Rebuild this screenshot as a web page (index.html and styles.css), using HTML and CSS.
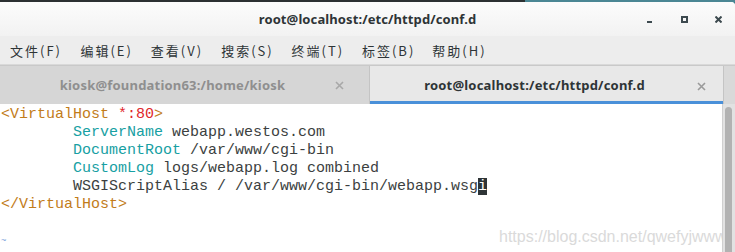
FILE: index.html
```html
<!DOCTYPE html>
<html lang="zh">
<head>
<meta charset="utf-8">
<title>root@localhost:/etc/httpd/conf.d</title>
<link rel="stylesheet" href="styles.css">
</head>
<body>
<div class="desktop-strip"></div>
<div class="window">
  <header class="titlebar">
    <div class="spacer"></div>
    <div class="title">root@localhost:/etc/httpd/conf.d</div>
    <div class="controls">
      <span class="ctl ctl-min"><svg width="6" height="6" viewBox="0 0 6 6"><rect x="0" y="4" width="5" height="2" fill="#3d4a4f"/></svg></span>
      <span class="ctl ctl-max"><svg width="7" height="7" viewBox="0 0 7 7"><rect x="1" y="1" width="5" height="5" fill="none" stroke="#3d4a4f" stroke-width="2"/></svg></span>
      <span class="ctl ctl-close"><svg width="7" height="7" viewBox="0 0 7 7"><path d="M0.5 0.5 L6.5 6.5 M6.5 0.5 L0.5 6.5" stroke="#3d4a4f" stroke-width="2"/></svg></span>
    </div>
  </header>
  <nav class="menubar">
    <span class="menu-item">文件(F)</span>
    <span class="menu-item">编辑(E)</span>
    <span class="menu-item">查看(V)</span>
    <span class="menu-item">搜索(S)</span>
    <span class="menu-item">终端(T)</span>
    <span class="menu-item">标签(B)</span>
    <span class="menu-item">帮助(H)</span>
  </nav>
  <div class="tabbar">
    <div class="tab tab-inactive">
      <span class="tab-label">kiosk@foundation63:/home/kiosk</span>
      <span class="tab-close"><svg width="9" height="9" viewBox="0 0 9 9"><path d="M1 1 L8 8 M8 1 L1 8" stroke="currentColor" stroke-width="1.6"/></svg></span>
    </div>
    <div class="tab tab-active">
      <span class="tab-label">root@localhost:/etc/httpd/conf.d</span>
      <span class="tab-close"><svg width="9" height="9" viewBox="0 0 9 9"><path d="M1 1 L8 8 M8 1 L1 8" stroke="currentColor" stroke-width="1.6"/></svg></span>
    </div>
    <div class="tab-end"></div>
  </div>
  <div class="terminal">
    <pre class="content"><span class="tag">&lt;VirtualHost </span><span class="red">*:80</span><span class="tag">&gt;</span>
        <span class="kw">ServerName</span> webapp.westos.com
        <span class="kw">DocumentRoot</span> /var/www/cgi-bin
        <span class="kw">CustomLog</span> logs/webapp.log combined
        WSGIScriptAlias / /var/www/cgi-bin/webapp.wsg<span class="cursor">i</span>
<span class="tag">&lt;/VirtualHost&gt;</span>

<span class="tilde">~</span><span class="watermark">https://blog.csdn.net/qwefyjwww</span></pre>
    <div class="scrollbar"><div class="thumb"></div></div>
  </div>
</div>
</body>
</html>
```
FILE: styles.css
```css
html, body {
  margin: 0;
  padding: 0;
}
body {
  width: 735px;
  height: 252px;
  overflow: hidden;
  background: #3d7f8c;
  font-family: "Noto Sans", "Noto Sans CJK SC", sans-serif;
}
.desktop-strip {
  height: 2px;
  background: linear-gradient(to right, #2c3133 0, #2c3133 525px, #4b8794 525px, #4b8794 100%);
}
.window {
  height: 250px;
  display: flex;
  flex-direction: column;
  background: #ffffff;
  border-top-right-radius: 4px;
  overflow: hidden;
}
.titlebar {
  height: 34px;
  display: grid;
  grid-template-columns: 1fr auto 1fr;
  align-items: center;
  background: linear-gradient(to bottom, #fcfcfc, #f2f2f2);
}
.title {
  font-size: 13px;
  font-weight: 700;
  color: #2e3436;
  letter-spacing: 0.1px;
}
.controls {
  display: flex;
  justify-content: flex-end;
  align-items: center;
  padding-right: 0;
}
.ctl {
  width: 34px;
  height: 20px;
  display: flex;
  align-items: center;
  justify-content: center;
}
.ctl-min { margin-top: 2px; }
.menubar {
  height: 28px;
  display: grid;
  grid-template-columns: repeat(7, 70.4px);
  align-items: center;
  padding-left: 10px;
  background: #ededed;
  font-family: "Noto Sans CJK SC", "Noto Sans", sans-serif;
  font-size: 13px;
  color: #2e3436;
  border-bottom: 1px solid #d9d9d9;
}
.menu-item {
  letter-spacing: 2px;
}
.tabbar {
  height: 39px;
  display: flex;
  background: #d6d6d6;
  border-top: 1px solid #c9c9c9;
  box-sizing: border-box;
}
.tab {
  position: relative;
  display: flex;
  align-items: center;
  justify-content: center;
  font-size: 13px;
  font-weight: 700;
  box-sizing: border-box;
  padding-right: 24px;
}
.tab-label {
  letter-spacing: 0.2px;
}
.tab-inactive {
  width: 370px;
  color: #8f8f8f;
  background: #d6d6d6;
  border-right: 1px solid #c4c4c4;
}
.tab-active {
  width: 353px;
  color: #2e3436;
  background: #e8e8e8;
  border-bottom: 3px solid #4a90d9;
  padding-top: 3px;
}
.tab-close {
  position: absolute;
  display: flex;
}
.tab-inactive .tab-close { right: 25px; top: 15px; color: #a8a8a8; }
.tab-active .tab-close { right: 17px; top: 16px; color: #9a9a9a; }
.tab-end {
  flex: 1;
  background: #d9d9d9;
  border-left: 1px solid #c4c4c4;
}
.terminal {
  flex: 1;
  display: flex;
  min-height: 0;
}
.content {
  position: relative;
  flex: 1;
  margin: 0;
  padding: 2px 0 0 1px;
  font-family: "Liberation Mono", monospace;
  font-size: 15px;
  line-height: 18px;
  color: #3c3f41;
  overflow: hidden;
}
.tag { color: #c27c1a; }
.red { color: #e0262b; }
.kw { color: #17a0a3; }
.cursor { background: #2e3436; color: #ffffff; }
.tilde { color: #6f9bd8; font-size: 9px; vertical-align: top; }
.watermark {
  position: absolute;
  left: 499px;
  top: 124px;
  font-family: "Liberation Sans", Arial, sans-serif;
  font-size: 16px;
  color: #dadada;
  white-space: nowrap;
}
.scrollbar {
  background: #e2e2e2;
  border-left: 1px solid #d0d0d0;
  padding: 3px 0 0 2px;
  box-sizing: border-box;
  width: 13px;
}
.thumb {
  width: 7px;
  height: 200px;
  background: #b2b2b2;
  border-radius: 4px;
}
```
